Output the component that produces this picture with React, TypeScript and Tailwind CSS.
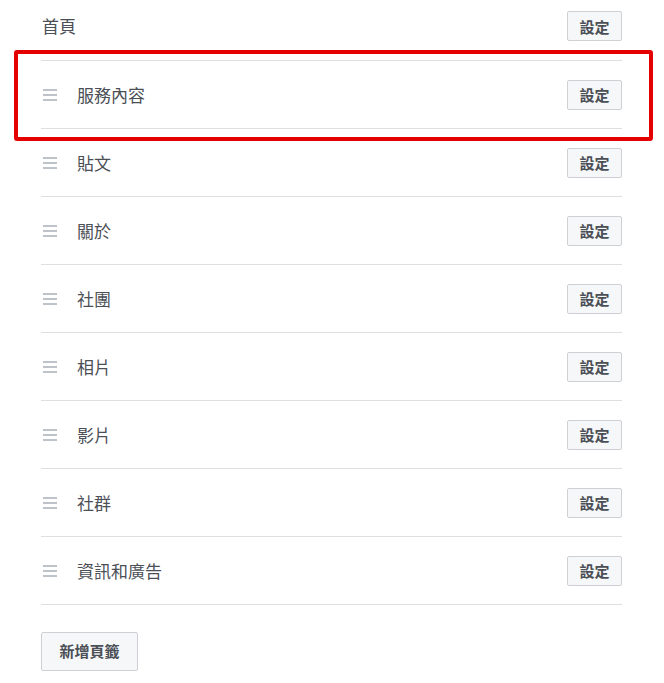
const tabs = ["服務內容", "貼文", "關於", "社團", "相片", "影片", "社群", "資訊和廣告"];

const font = { fontFamily: '"Noto Sans CJK TC", "Noto Sans", sans-serif' };

function SetButton() {
  return (
    <button className="h-[30px] w-[55px] rounded-[2px] border border-[#ced0d4] bg-[#f6f7f9] text-[15px] font-bold leading-none text-[#4b4f56]">
      設定
    </button>
  );
}

function DragHandle() {
  return (
    <span className="flex w-[14px] flex-col gap-[3px]" aria-hidden>
      <span className="h-[2px] w-full bg-[#bec3c9]" />
      <span className="h-[2px] w-full bg-[#bec3c9]" />
      <span className="h-[2px] w-full bg-[#bec3c9]" />
    </span>
  );
}

export default function App() {
  return (
    <div className="relative min-h-[683px] w-[664px] bg-white" style={font}>
      <div className="ml-[41px] w-[581px]">
        <div className="flex items-center justify-between border-b border-[#dddfe2] pt-[11px] pb-[19px]">
          <span className="pl-px text-[17px] text-[#4b4f56]">首頁</span>
          <SetButton />
        </div>
        {tabs.map((name) => (
          <div
            key={name}
            className="flex h-[68px] items-center justify-between border-b border-[#dddfe2]"
          >
            <div className="flex items-center">
              <span className="ml-[2px]">
                <DragHandle />
              </span>
              <span className="ml-[20px] text-[17px] text-[#4b4f56]">{name}</span>
            </div>
            <SetButton />
          </div>
        ))}
        <button className="mt-[27px] h-[39px] w-[97px] rounded-[2px] border border-[#ced0d4] bg-[#f6f7f9] text-[15px] font-bold text-[#4b4f56]">
          新增頁籤
        </button>
      </div>
      <div className="pointer-events-none absolute top-[50px] left-[14px] h-[91px] w-[639px] rounded-[3px] border-4 border-[#e50000]" />
    </div>
  );
}
